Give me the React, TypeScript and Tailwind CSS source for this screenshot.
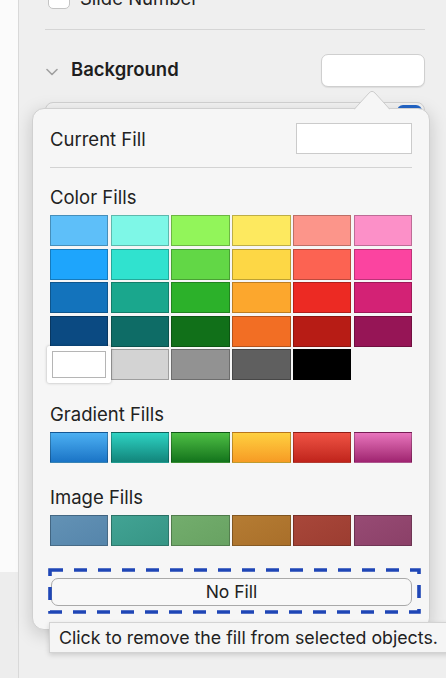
import React from "react";

const colorRows: string[][] = [
  ["bg-[#5ebff9]", "bg-[#7ef7e7]", "bg-[#92f55a]", "bg-[#fde95f]", "bg-[#fc958a]", "bg-[#fc90c8]"],
  ["bg-[#1ea5fc]", "bg-[#30e2cf]", "bg-[#62d746]", "bg-[#fdd745]", "bg-[#fc6352]", "bg-[#fb44a0]"],
  ["bg-[#1373bc]", "bg-[#1aa78d]", "bg-[#2cb12a]", "bg-[#fca72d]", "bg-[#ec2a23]", "bg-[#d32275]"],
  ["bg-[#0b4a82]", "bg-[#0e6c66]", "bg-[#117019]", "bg-[#f26e24]", "bg-[#b71c15]", "bg-[#961556]"],
];
const grays: string[] = ["bg-[#d3d3d3]", "bg-[#929292]", "bg-[#5f5f5f]", "bg-[#000000]"];
const gradients: string[] = [
  "bg-linear-to-b from-[#4cb0f2] to-[#1a74c6]",
  "bg-linear-to-b from-[#2ed3c3] to-[#12857b]",
  "bg-linear-to-b from-[#4dbf45] to-[#12741c]",
  "bg-linear-to-b from-[#fed040] to-[#f69b24]",
  "bg-linear-to-b from-[#ef5244] to-[#c0231b]",
  "bg-linear-to-b from-[#e874bd] to-[#9f2370]",
];
const images: string[] = [
  "bg-linear-to-br from-[#6392b5] to-[#5585ab]",
  "bg-linear-to-br from-[#42a394] to-[#369585]",
  "bg-linear-to-br from-[#73ad6d] to-[#68a262]",
  "bg-linear-to-br from-[#b57c33] to-[#a96f2a]",
  "bg-linear-to-br from-[#a8473a] to-[#9c3d31]",
  "bg-linear-to-br from-[#974b74] to-[#8b4068]",
];

const cell = "h-[31px] border border-black/25";

export default function App() {
  return (
    <div className="relative w-[446px] h-[678px] overflow-hidden flex bg-[#efefef] text-[#222222] font-['Inter','Noto_Sans',sans-serif]">
      {/* left strip */}
      <div className="w-[19px] shrink-0 flex flex-col border-r border-[#d9d9d9]">
        <div className="h-[572px] bg-[#fbfbfb]" />
        <div className="flex-1 bg-[#ededed]" />
      </div>

      {/* inspector panel */}
      <div className="flex-1 flex flex-col pl-[26px] pr-[21px]">
        <div className="flex items-center gap-[10px] h-[24px] mt-[-14px] ml-[3px]">
          <div className="w-[22px] h-[22px] rounded-[5px] border border-[#c4c4c4] bg-white" />
          <span className="text-[18.5px] leading-[22px]">Slide Number</span>
        </div>
        <div className="mt-[19px] h-px bg-[#d5d5d5]" />

        <div className="mt-[24px] h-[33px] flex items-center">
          <svg width="12" height="8" viewBox="0 0 12 8" className="ml-[1px] mb-[-2px]">
            <path d="M1 1.5 L6 6.5 L11 1.5" fill="none" stroke="#a0a0a0" strokeWidth="1.6" strokeLinecap="round" strokeLinejoin="round" />
          </svg>
          <span className="ml-[13px] mt-[-3px] text-[18.5px] font-semibold leading-[22px] text-[#1e1e1e]">Background</span>
          <div className="ml-auto w-[104px] h-[33px] rounded-[7px] bg-white border border-[#cfcfcf] shadow-[0_1px_1px_rgba(0,0,0,0.08)]" />
        </div>

        <div className="mt-[15px] h-[40px] rounded-[8px] border border-[#d2d2d2] bg-[#f4f4f4] flex justify-end pt-[2px] pr-[2px]">
          <div className="w-[25px] h-[25px] rounded-[6px] bg-[#2366c9]" />
        </div>
      </div>

      {/* popover */}
      <div className="absolute left-[32px] top-[108px] w-[398px] h-[522px] rounded-[12px] bg-[#f6f6f6] border border-[#d0d0d0] shadow-[0_4px_18px_rgba(0,0,0,0.18)]">
        <svg width="36" height="22" viewBox="0 0 36 22" className="absolute left-[321px] top-[-20px]">
          <path d="M0 21 L15 4 Q18 0.8 21 4 L36 21 L36 22 L0 22 Z" fill="#f6f6f6" />
          <path d="M0 20.5 L15 4 Q18 0.8 21 4 L36 20.5" fill="none" stroke="#cdcdcd" strokeWidth="1" />
        </svg>

        <div className="flex flex-col px-[17px] pt-[14px]">
          <div className="h-[31px] flex items-center justify-between">
            <span className="text-[18.5px] leading-[22px]">Current Fill</span>
            <div className="w-[116px] h-[31px] bg-white border border-[#cbcbcb]" />
          </div>
          <div className="mt-[13px] h-px bg-[#d3d3d3]" />

          <div className="mt-[18px] text-[18.5px] leading-[22px]">Color Fills</div>
          <div className="mt-[7px] grid grid-cols-6 gap-x-[2.4px] gap-y-[2.5px]">
            {colorRows.flat().map((c, i) => (
              <div key={i} className={`${cell} ${c}`} />
            ))}
            <div className="relative h-[31px]">
              <div className="absolute left-[-3px] right-[-3px] top-[-3px] bottom-[-3px] bg-white rounded-[2px] shadow-[0_0_3px_rgba(0,0,0,0.3)] p-[5px]">
                <div className="w-full h-full bg-white border border-[#b5b5b5]" />
              </div>
            </div>
            {grays.map((c, i) => (
              <div key={i} className={`${cell} ${c}`} />
            ))}
          </div>

          <div className="mt-[23px] text-[18.5px] leading-[22px]">Gradient Fills</div>
          <div className="mt-[7px] grid grid-cols-6 gap-x-[2.4px]">
            {gradients.map((c, i) => (
              <div key={i} className={`${cell} ${c}`} />
            ))}
          </div>

          <div className="mt-[23px] text-[18.5px] leading-[22px]">Image Fills</div>
          <div className="mt-[7px] grid grid-cols-6 gap-x-[2.4px]">
            {images.map((c, i) => (
              <div key={i} className={`${cell} ${c}`} />
            ))}
          </div>

          <div className="relative mt-[32px] ml-[1px]">
            <button className="w-[361px] h-[28px] rounded-[7px] bg-[#f8f8f8] border border-[#a9a9a9] text-[17.5px] leading-[20px] text-[#222222] flex items-center justify-center">
              No Fill
            </button>
            <svg width="374" height="48" viewBox="0 0 374 48" className="absolute left-[-3px] top-[-11px] pointer-events-none">
              <rect x="2" y="3" width="369" height="42" fill="none" stroke="#1f46b6" strokeWidth="3.6" strokeDasharray="13 11" />
            </svg>
          </div>
        </div>
      </div>

      {/* tooltip */}
      <div className="absolute left-[49px] top-[622px] w-[420px] h-[31px] bg-[#f5f5f5] border border-[#d3d3d3] shadow-[0_2px_5px_rgba(0,0,0,0.15)] pl-[9px] flex items-center">
        <span className="text-[17.8px] leading-[22px] text-[#222222] whitespace-nowrap">Click to remove the fill from selected objects.</span>
      </div>
    </div>
  );
}
